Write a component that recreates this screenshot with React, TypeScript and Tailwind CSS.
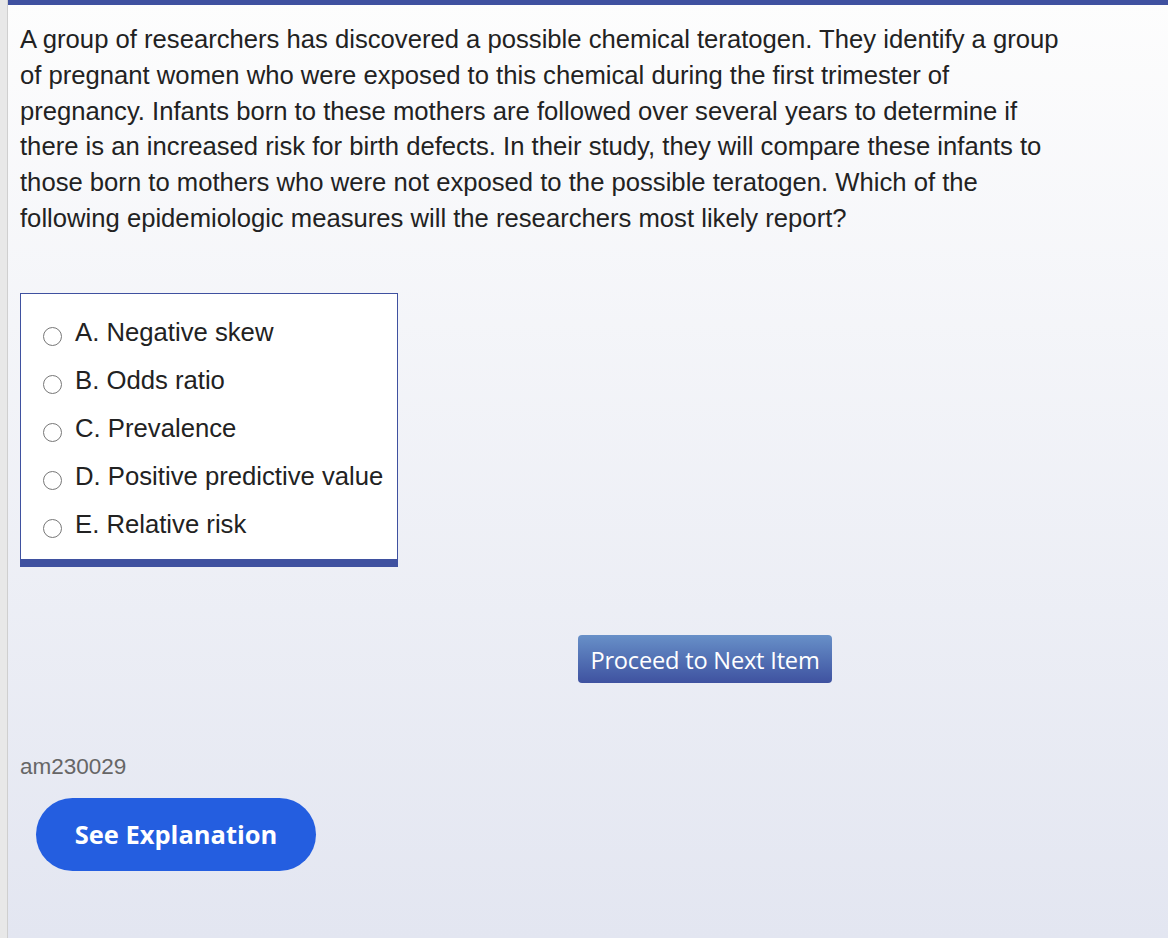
import React from "react";

const options = [
  "A. Negative skew",
  "B. Odds ratio",
  "C. Prevalence",
  "D. Positive predictive value",
  "E. Relative risk",
];

const lines = [
  "A group of researchers has discovered a possible chemical teratogen. They identify a group",
  "of pregnant women who were exposed to this chemical during the first trimester of",
  "pregnancy. Infants born to these mothers are followed over several years to determine if",
  "there is an increased risk for birth defects. In their study, they will compare these infants to",
  "those born to mothers who were not exposed to the possible teratogen. Which of the",
  "following epidemiologic measures will the researchers most likely report?",
];

export default function App() {
  return (
    <div className="flex w-[1168px] h-[938px] overflow-hidden">
      <div className="w-[8px] shrink-0 bg-[#e8e8e8] border-r border-[#cfcfcf]" />
      <div className="flex-1 flex flex-col bg-gradient-to-b from-[#fdfdfd] to-[#e3e6f1]">
        <div className="h-[5px] shrink-0 bg-[#3f51a0]" />
        <div className="pl-[12px] pt-[17px] font-['Liberation_Sans',Arial,sans-serif] text-[25.65px] leading-[35.8px] text-[#222]">
          {lines.map((l) => (
            <div key={l} className="whitespace-nowrap">
              {l}
            </div>
          ))}
        </div>
        <div className="ml-[12px] mt-[56px] w-[378px] h-[274px] bg-white border border-[#3f51a0] border-b-[8px] pt-[14px] font-['Liberation_Sans',Arial,sans-serif]">
          {options.map((o) => (
            <div key={o} className="flex items-center h-[48px]">
              <span className="ml-[22px] w-[19px] h-[19px] shrink-0 rounded-full border border-[#777] bg-white mt-[10px]" />
              <span className="ml-[13px] text-[25.7px] text-[#222] whitespace-nowrap">{o}</span>
            </div>
          ))}
        </div>
        <div className="flex justify-start pl-[570px] mt-[68px]">
          <button className="w-[254px] h-[48px] pt-[3px] rounded-[4px] bg-gradient-to-b from-[#6890c8] to-[#3f52a0] text-white font-['Open_Sans',sans-serif] text-[23.6px] tracking-[-0.2px]">
            Proceed to Next Item
          </button>
        </div>
        <div className="pl-[12px] mt-[70px] font-['Liberation_Sans',Arial,sans-serif] text-[22.5px] text-[#666] leading-[28px]">
          am230029
        </div>
        <div className="pl-[28px] mt-[17px]">
          <button className="w-[280px] h-[73px] rounded-full bg-[#245ee0] text-white font-['Open_Sans',sans-serif] font-bold text-[25.5px]">
            See Explanation
          </button>
        </div>
      </div>
    </div>
  );
}
